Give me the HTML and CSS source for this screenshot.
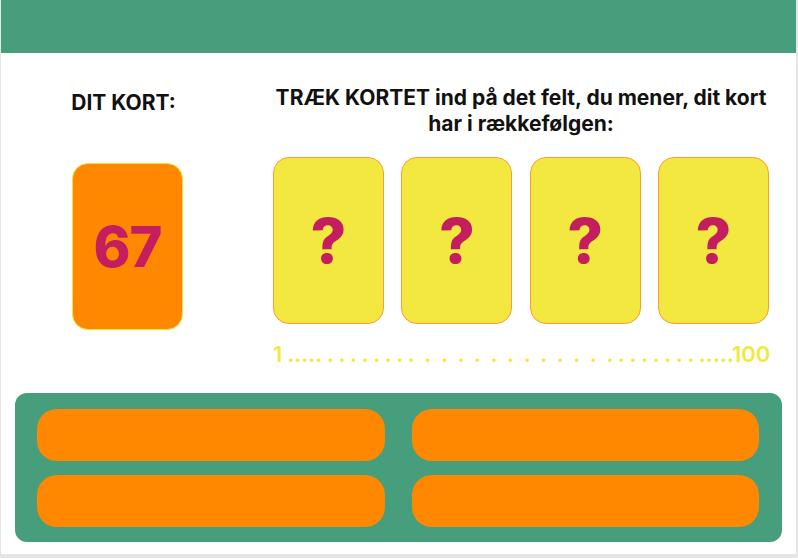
FILE: index.html
```html
<!DOCTYPE html>
<html lang="da">
<head>
<meta charset="utf-8">
<title>Træk kortet</title>
<link rel="stylesheet" href="styles.css">
</head>
<body>
<div class="page">
  <header class="topbar"></header>
  <main class="game">
    <section class="mine">
      <h2 class="label">DIT KORT:</h2>
      <div class="card card-mine">67</div>
    </section>
    <section class="board">
      <h1 class="title">TRÆK KORTET ind på det felt, du mener, dit kort har i rækkefølgen:</h1>
      <div class="slots">
        <div class="card card-slot">?</div>
        <div class="card card-slot">?</div>
        <div class="card card-slot">?</div>
        <div class="card card-slot">?</div>
      </div>
      <div class="scale">1 ..... . . . . . . . .  .  .  .  .  .  .  .  .  .  .  .  . . . . . . . . .....100</div>
    </section>
  </main>
  <section class="answers">
    <div class="answer"></div>
    <div class="answer"></div>
    <div class="answer"></div>
    <div class="answer"></div>
  </section>
</div>
</body>
</html>
```

FILE: styles.css
```css
html, body {
  margin: 0;
  padding: 0;
}
body {
  background: #e6e6e6;
  width: 798px;
  height: 558px;
  padding: 0 2px 4px 1px;
  box-sizing: border-box;
  font-family: Inter, "Noto Sans", sans-serif;
}
.page {
  background: #ffffff;
  width: 795px;
  height: 554px;
  display: flex;
  flex-direction: column;
}
.topbar {
  height: 53px;
  background: #469e7d;
  flex: none;
}
.game {
  display: flex;
  padding-left: 71px;
  gap: 90px;
}
.mine {
  width: 111px;
  display: flex;
  flex-direction: column;
  align-items: center;
}
.label {
  margin: 37px 8px 0 0;
  font-size: 21px;
  line-height: 26px;
  font-weight: 700;
  color: #111;
  white-space: nowrap;
}
.card {
  box-sizing: border-box;
  width: 111px;
  height: 167px;
  border-radius: 16px;
  display: flex;
  align-items: center;
  justify-content: center;
  color: #c41e61;
  font-weight: 800;
}
.card-mine {
  margin: 47px 0 0;
  background: #ff8800;
  border: 1px solid #f4e23c;
  font-size: 56px;
  letter-spacing: -1px;
}
.board {
  width: 496px;
  display: flex;
  flex-direction: column;
}
.title {
  margin: 32px 0 0;
  font-size: 21px;
  line-height: 26px;
  font-weight: 700;
  color: #111;
  text-align: center;
}
.slots {
  margin-top: 20px;
  display: flex;
  justify-content: space-between;
}
.card-slot {
  background: #f3e840;
  border: 1px solid #ff9a3a;
  font-size: 62px;
}
.scale {
  margin-top: 17px;
  white-space: pre;
  color: #f3e840;
  font-size: 22px;
  line-height: 26px;
  font-weight: 600;
  text-align: center;
  word-spacing: -0.55px;
}
.answers {
  margin: 26px 14px 0 14px;
  height: 149px;
  box-sizing: border-box;
  background: #469e7d;
  border-radius: 12px;
  padding: 16px 23px 15px 22px;
  display: grid;
  grid-template-columns: 1fr 1fr;
  column-gap: 27px;
  row-gap: 14px;
}
.answer {
  background: #ff8800;
  border-radius: 20px;
}
```
